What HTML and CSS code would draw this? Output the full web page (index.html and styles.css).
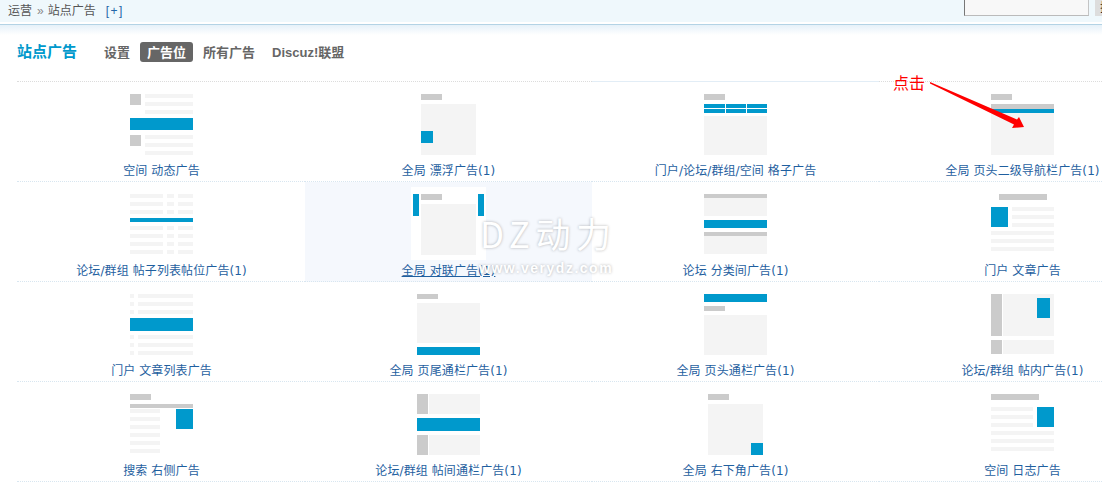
FILE: index.html
```html
<!DOCTYPE html>
<html lang="zh-CN">
<head>
<meta charset="utf-8">
<title>站点广告</title>
<link rel="stylesheet" href="styles.css">
</head>
<body>
<div class="page">
  <div class="topbar">
    <div class="crumbs"><span>运营</span><span class="sep">»</span><span>站点广告</span><a class="plus">[+]</a></div>
    <div class="search"><div class="search-input"></div><div class="search-btn">搜索</div></div>
  </div>
  <div class="rule"></div>
  <div class="head">
    <h1 class="title">站点广告</h1>
    <nav class="tabs">
      <a class="tab">设置</a>
      <a class="tab active">广告位</a>
      <a class="tab">所有广告</a>
      <a class="tab">Discuz!联盟</a>
    </nav>
  </div>
  <div class="grid">
    <a class="cell">
      <svg class="ic" viewBox="0 0 63 61"><rect class="g" width="11" height="11"/><rect class="l" x="15" width="48" height="4"/><rect class="l" x="15" y="8" width="48" height="4"/><rect class="l" x="15" y="16" width="48" height="4"/><rect class="b" y="24" width="63" height="12"/><rect class="g" y="41" width="11" height="11"/><rect class="l" x="15" y="41" width="48" height="4"/><rect class="l" x="15" y="49" width="48" height="4"/><rect class="l" x="15" y="57" width="48" height="4"/></svg>
      <span class="name">空间 动态广告</span>
    </a>
    <a class="cell">
      <svg class="ic narrow" viewBox="0 0 55 61"><rect class="g" width="21" height="6"/><rect class="l" y="10" width="55" height="51"/><rect class="b" y="37" width="12" height="12"/></svg>
      <span class="name">全局 漂浮广告(1)</span>
    </a>
    <a class="cell solid-top">
      <svg class="ic" viewBox="0 0 63 61"><rect class="g" width="21" height="6"/><rect class="b" y="10" width="21" height="4"/><rect class="b" x="22" y="10" width="20" height="4"/><rect class="b" x="43" y="10" width="20" height="4"/><rect class="b" y="15" width="21" height="4"/><rect class="b" x="22" y="15" width="20" height="4"/><rect class="b" x="43" y="15" width="20" height="4"/><rect class="l" y="22" width="63" height="39"/></svg>
      <span class="name">门户/论坛/群组/空间 格子广告</span>
    </a>
    <a class="cell">
      <svg class="ic" viewBox="0 0 63 61"><rect class="g" width="21" height="6"/><rect class="g" y="10" width="63" height="5"/><rect class="b" y="15" width="63" height="4"/><rect class="l" y="19" width="63" height="42"/></svg>
      <span class="name">全局 页头二级导航栏广告(1)</span>
    </a>

    <a class="cell">
      <svg class="ic" viewBox="0 0 63 61"><rect class="l" width="33" height="4"/><rect class="l" x="37" width="7" height="4"/><rect class="l" x="48" width="15" height="4"/><rect class="l" y="8" width="33" height="4"/><rect class="l" x="37" y="8" width="7" height="4"/><rect class="l" x="48" y="8" width="15" height="4"/><rect class="l" y="16" width="33" height="4"/><rect class="l" x="37" y="16" width="7" height="4"/><rect class="l" x="48" y="16" width="15" height="4"/><rect class="b" y="24" width="63" height="4"/><rect class="l" y="32" width="33" height="4"/><rect class="l" x="37" y="32" width="7" height="4"/><rect class="l" x="48" y="32" width="15" height="4"/><rect class="l" y="40" width="33" height="4"/><rect class="l" x="37" y="40" width="7" height="4"/><rect class="l" x="48" y="40" width="15" height="4"/><rect class="l" y="48" width="33" height="4"/><rect class="l" x="37" y="48" width="7" height="4"/><rect class="l" x="48" y="48" width="15" height="4"/><rect class="l" y="56" width="33" height="4"/><rect class="l" x="37" y="56" width="7" height="4"/><rect class="l" x="48" y="56" width="15" height="4"/></svg>
      <span class="name">论坛/群组 帖子列表帖位广告(1)</span>
    </a>
    <a class="cell hot">
      <svg class="ic wide" viewBox="0 0 75 73"><rect class="b" x="2" y="7" width="6" height="22"/><rect class="b" x="67" y="7" width="6" height="22"/><rect class="g" x="10" y="7" width="21" height="6"/><rect class="l" x="10" y="17" width="55" height="51"/></svg>
      <span class="name">全局 对联广告(1)</span>
    </a>
    <a class="cell">
      <svg class="ic" viewBox="0 0 63 61"><rect class="g" width="63" height="4"/><rect class="l" y="4" width="63" height="18"/><rect class="b" y="26" width="63" height="8"/><rect class="g" y="38" width="63" height="4"/><rect class="l" y="42" width="63" height="18"/></svg>
      <span class="name">论坛 分类间广告(1)</span>
    </a>
    <a class="cell">
      <svg class="ic" viewBox="0 0 63 61"><rect class="g" x="8" width="48" height="6"/><rect class="b" y="13" width="17" height="20"/><rect class="l" x="21" y="13" width="42" height="4"/><rect class="l" x="21" y="21" width="42" height="4"/><rect class="l" x="21" y="29" width="42" height="4"/><rect class="l" y="37" width="63" height="4"/><rect class="l" y="45" width="63" height="4"/><rect class="l" y="53" width="63" height="4"/></svg>
      <span class="name">门户 文章广告</span>
    </a>

    <a class="cell">
      <svg class="ic" viewBox="0 0 63 61"><rect class="l" width="4" height="4"/><rect class="l" x="8" width="55" height="4"/><rect class="l" y="8" width="4" height="4"/><rect class="l" x="8" y="8" width="55" height="4"/><rect class="l" y="16" width="4" height="4"/><rect class="l" x="8" y="16" width="55" height="4"/><rect class="b" y="24" width="63" height="13"/><rect class="l" y="41" width="4" height="4"/><rect class="l" x="8" y="41" width="55" height="4"/><rect class="l" y="49" width="4" height="4"/><rect class="l" x="8" y="49" width="55" height="4"/><rect class="l" y="57" width="4" height="4"/><rect class="l" x="8" y="57" width="55" height="4"/></svg>
      <span class="name">门户 文章列表广告</span>
    </a>
    <a class="cell">
      <svg class="ic" viewBox="0 0 63 61"><rect class="g" width="21" height="5"/><rect class="l" y="9" width="63" height="40"/><rect class="b" y="53" width="63" height="8"/></svg>
      <span class="name">全局 页尾通栏广告(1)</span>
    </a>
    <a class="cell">
      <svg class="ic" viewBox="0 0 63 61"><rect class="b" width="63" height="8"/><rect class="g" y="12" width="21" height="5"/><rect class="l" y="21" width="63" height="40"/></svg>
      <span class="name">全局 页头通栏广告(1)</span>
    </a>
    <a class="cell">
      <svg class="ic" viewBox="0 0 63 61"><rect class="g" width="11" height="42"/><rect class="l" x="12" width="51" height="42"/><rect class="b" x="46" y="4" width="13" height="20"/><rect class="g" y="46" width="11" height="14"/><rect class="l" x="12" y="46" width="51" height="14"/></svg>
      <span class="name">论坛/群组 帖内广告(1)</span>
    </a>

    <a class="cell">
      <svg class="ic" viewBox="0 0 63 61"><rect class="g" width="21" height="6"/><rect class="g" y="10" width="63" height="4"/><rect class="l" y="15" width="30" height="4"/><rect class="l" y="23" width="30" height="4"/><rect class="l" y="31" width="30" height="4"/><rect class="l" y="39" width="30" height="4"/><rect class="l" y="47" width="30" height="4"/><rect class="l" y="55" width="30" height="4"/><rect class="b" x="46" y="15" width="17" height="20"/></svg>
      <span class="name">搜索 右侧广告</span>
    </a>
    <a class="cell">
      <svg class="ic" viewBox="0 0 63 61"><rect class="g" width="11" height="20"/><rect class="l" x="12" width="51" height="20"/><rect class="b" y="24" width="63" height="13"/><rect class="g" y="41" width="11" height="20"/><rect class="l" x="12" y="41" width="51" height="20"/></svg>
      <span class="name">论坛/群组 帖间通栏广告(1)</span>
    </a>
    <a class="cell">
      <svg class="ic narrow" viewBox="0 0 55 61"><rect class="g" width="21" height="6"/><rect class="l" y="10" width="55" height="51"/><rect class="b" x="43" y="49" width="12" height="12"/></svg>
      <span class="name">全局 右下角广告(1)</span>
    </a>
    <a class="cell">
      <svg class="ic" viewBox="0 0 63 61"><rect class="g" width="48" height="6"/><rect class="l" y="13" width="42" height="4"/><rect class="l" y="21" width="42" height="4"/><rect class="l" y="29" width="42" height="4"/><rect class="b" x="46" y="13" width="17" height="20"/><rect class="l" y="37" width="63" height="4"/><rect class="l" y="45" width="63" height="4"/><rect class="l" y="53" width="63" height="4"/></svg>
      <span class="name">空间 日志广告</span>
    </a>
  </div>

  <div class="note">点击</div>
  <svg class="arrow" viewBox="0 0 100 50"><polygon points="1,0 88,37.5 90,35 95,45 83,46 85,42.5 1,1.5"/></svg>
  <div class="watermark"><div class="wm-big">DZ动力</div><div class="wm-small">www.verydz.com</div></div>
</div>
</body>
</html>
```
FILE: styles.css
```css
* { box-sizing: border-box; }
html, body { margin: 0; padding: 0; background: #fff; }
.page {
  position: relative;
  width: 1102px;
  height: 485px;
  overflow: hidden;
  font: 12px/16px "DejaVu Sans", "Noto Sans CJK SC", sans-serif;
  color: #555;
}
.topbar {
  display: flex;
  justify-content: space-between;
  height: 22px;
  background: #eff8fc;
}
.crumbs {
  display: flex;
  align-items: center;
  height: 22px;
  padding-left: 8px;
  font-family: "Liberation Sans", "Noto Sans CJK SC", sans-serif;
}
.sep { margin: 0 4px 0 5px; color: #888; }
.plus { margin-left: 10px; color: #2366a8; letter-spacing: 1.5px; }
.search { display: flex; gap: 6px; height: 16px; width: 138px; }
.search-input {
  width: 125px;
  background: #f8f8f8;
  border-left: 1px solid #777;
  border-right: 1px solid #c4c4c4;
  border-bottom: 1px solid #bbb;
}
.search-btn {
  width: 7px;
  padding-left: 5px;
  overflow: hidden;
  white-space: nowrap;
  background: #ddd;
  color: #222;
}
.rule { height: 3px; border-bottom: 1px solid #b3d3e5; }
.head {
  display: flex;
  align-items: center;
  height: 54px;
  margin-bottom: 2px;
  padding-left: 17px;
  background: linear-gradient(#e6f1f9, #fff) no-repeat;
  background-size: 100% 10px;
}
.title {
  width: 60px;
  margin: 0;
  font-size: 15px;
  line-height: 20px;
  font-weight: 700;
  color: #0099cc;
}
.tabs { display: flex; gap: 3px; margin-left: 20px; }
.tab {
  height: 20px;
  padding: 0 7px;
  border-radius: 3px;
  font-family: "Liberation Sans", "Noto Sans CJK SC", sans-serif;
  font-size: 13px;
  line-height: 21px;
  font-weight: 700;
  color: #666;
}
.tab.active { background: #666; color: #fff; }
.grid {
  display: grid;
  grid-template-columns: 288px 287px 287px 287px;
  margin-left: 17px;
  width: 1149px;
}
.cell {
  display: flex;
  flex-direction: column;
  align-items: center;
  height: 100px;
  padding-top: 12px;
  border-bottom: 1px dotted #d8e6f0;
}
.cell:nth-child(4n+1) { padding-left: 1px; }
.cell:nth-child(-n+4) { height: 101px; border-top: 1px dotted #dcdcdc; }
.cell.solid-top { border-top: 1px solid #e2edf6; }
.cell.hot { background: #f5f8fd; }
.cell.hot .name { text-decoration: underline; }
.ic { display: block; width: 63px; height: 61px; flex: none; }
.ic.narrow { width: 55px; }
.ic.wide { width: 75px; height: 73px; margin: -7px 0 -5px; background: #fff; }
.g { fill: #cbcbcb; }
.l { fill: #f4f4f4; }
.b { fill: #0099cc; }
.name {
  margin-top: 8px;
  color: #1f5f9f;
  letter-spacing: .1px;
  white-space: nowrap;
}
.note {
  position: absolute;
  left: 893px;
  top: 74px;
  font-size: 16px;
  line-height: 20px;
  color: #f00;
}
.arrow {
  position: absolute;
  left: 929px;
  top: 82px;
  width: 100px;
  height: 50px;
  fill: #f00;
}
.watermark {
  position: absolute;
  left: 480px;
  top: 208px;
  width: 140px;
  color: #fff;
  text-shadow: 0 0 3px rgba(0, 0, 0, .3);
}
.wm-big {
  font-family: "Noto Sans CJK SC", sans-serif;
  font-size: 35px;
  line-height: 50px;
  letter-spacing: 5.5px;
  white-space: nowrap;
}
.wm-small {
  margin-top: 2px;
  margin-left: -1px;
  font-family: "Liberation Sans", sans-serif;
  font-size: 14px;
  font-weight: 700;
  line-height: 16px;
  letter-spacing: 1.5px;
  white-space: nowrap;
}
```
